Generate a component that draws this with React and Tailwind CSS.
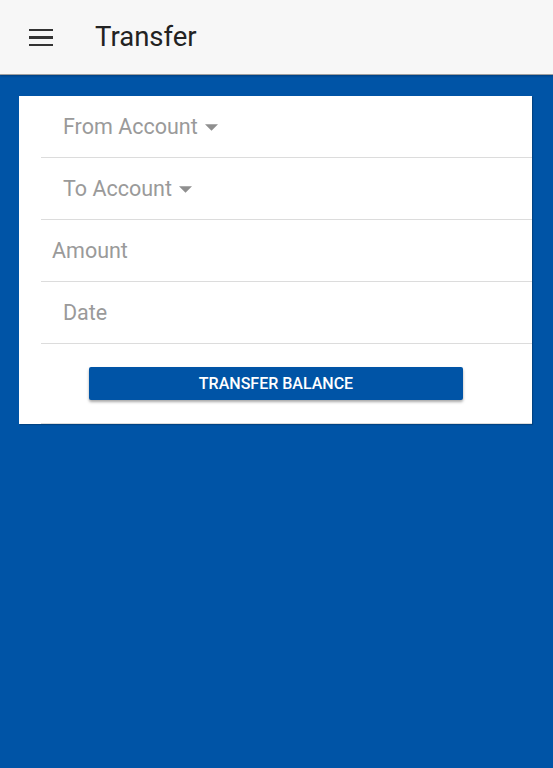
import React from "react";

function Row({ label, caret, indent }) {
  return (
    <div className="h-[62px] border-b border-[#dcdcdc] flex items-center">
      <div className={`flex items-center ${indent}`}>
        <span className="text-[21.5px] text-[#9a9a9a] leading-none">{label}</span>
        {caret && (
          <svg width="13" height="7" viewBox="0 0 12 6" className="ml-[7px] mt-[1px]">
            <path d="M0 0 L12 0 L6 6 Z" fill="#8f8f8f" />
          </svg>
        )}
      </div>
    </div>
  );
}

export default function App() {
  return (
    <div
      className="w-[553px] h-[768px] bg-[#0054a6] flex flex-col"
      style={{ fontFamily: "Roboto, 'Noto Sans', sans-serif" }}
    >
      <div className="h-[75px] bg-[#f7f7f7] border-b border-[#a0a0a0] flex items-center shrink-0 shadow-[0_1px_2px_rgba(0,0,0,0.25)]">
        <div className="ml-[29px] w-[24px] flex flex-col gap-[5px] mt-[1px]">
          <div className="h-[2.5px] bg-[#333]" />
          <div className="h-[2.5px] bg-[#333]" />
          <div className="h-[2.5px] bg-[#333]" />
        </div>
        <div className="ml-[42px] text-[27.5px] text-[#222] leading-none">Transfer</div>
      </div>
      <div className="pt-[21px] pl-[19px] pr-[21px]">
        <div className="bg-white h-[328px] pl-[22px] flex flex-col shadow-[1px_1px_1px_rgba(0,0,0,0.2)]">
          <Row label="From Account" caret indent="pl-[22px]" />
          <Row label="To Account" caret indent="pl-[22px]" />
          <Row label="Amount" indent="pl-[11px]" />
          <Row label="Date" indent="pl-[22px]" />
          <div className="h-[80px] border-b border-[#dcdcdc] flex justify-start">
            <button className="mt-[23px] ml-[48px] w-[374px] h-[33px] bg-[#0054a6] rounded-[2px] text-white text-[16px] font-medium shadow-[0_2px_3px_rgba(0,0,0,0.35)] flex items-center justify-center">
              TRANSFER BALANCE
            </button>
          </div>
        </div>
      </div>
    </div>
  );
}
